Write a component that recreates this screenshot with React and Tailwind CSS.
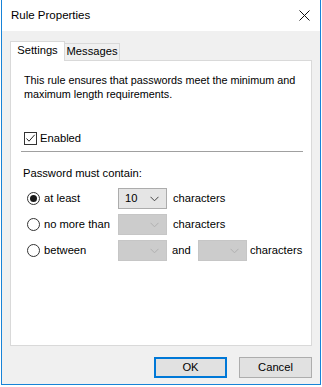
import React from "react";

const font = { fontFamily: '"Liberation Sans", Arial, sans-serif' };

function Chevron({ color = "#333" }) {
  return (
    <svg width="9" height="6" viewBox="0 0 9 6" className="block">
      <path d="M0.5 0.8 L4.5 4.8 L8.5 0.8" fill="none" stroke={color} strokeWidth="1" />
    </svg>
  );
}

function Combo({ value, disabled }) {
  return (
    <div
      className={
        "flex h-[21px] w-[49px] shrink-0 items-center justify-between border pl-[6px] pr-[7px] " +
        (disabled ? "border-[#c6c6c6] bg-[#cccccc]" : "border-[#acacac] bg-[#e5e5e5]")
      }
    >
      <span className="leading-none text-black">{value || ""}</span>
      <Chevron color={disabled ? "#b0b0b0" : "#444"} />
    </div>
  );
}

function Radio({ checked }) {
  return (
    <div className="flex h-[13px] w-[13px] shrink-0 items-center justify-center rounded-full border border-[#333] bg-white">
      {checked && <div className="h-[7px] w-[7px] rounded-full bg-[#1a1a1a]" />}
    </div>
  );
}

export default function App() {
  return (
    <div className="h-[387px] w-[322px] whitespace-nowrap bg-white text-[11.2px] text-black" style={font}>
      <div className="mx-[1px] flex h-[385px] w-[320px] flex-col border-x border-b border-[#1883d7] bg-[#f0f0f0]">
        {/* Title bar */}
        <div className="flex h-[31px] items-center justify-between bg-white pl-[9px] pr-[10px]">
          <span className="text-[11.5px] leading-none">Rule Properties</span>
          <svg width="11" height="11" viewBox="0 0 11 11" className="block">
            <path d="M0.5 0.5 L10.5 10.5 M10.5 0.5 L0.5 10.5" stroke="#111" strokeWidth="1" />
          </svg>
        </div>
        {/* Body */}
        <div className="flex flex-1 flex-col px-[8px] pt-[10px]">
          {/* Tabs */}
          <div className="relative z-10 -mb-[1px] flex h-[20px] items-end">
            <div className="flex h-[20px] w-[55px] items-center justify-center border-x border-t border-[#d9d9d9] bg-white pb-[1px]">
              <span className="leading-none">Settings</span>
            </div>
            <div className="flex h-[18px] w-[55px] items-center justify-center border-b border-r border-t border-[#d9d9d9] bg-[#f0f0f0]">
              <span className="leading-none">Messages</span>
            </div>
          </div>
          {/* Panel */}
          <div className="flex h-[286px] flex-col border border-[#d9d9d9] bg-white">
            <div className="pl-[13px] pr-[8px] pt-[12px] text-[10.8px] leading-[14px]">
              <div>This rule ensures that passwords meet the minimum and</div>
              <div>maximum length requirements.</div>
            </div>
            <div className="mt-[31px] flex h-[13px] items-center pl-[13px]">
              <div className="flex h-[13px] w-[13px] items-center justify-center border border-[#333] bg-white">
                <svg width="11" height="11" viewBox="0 0 11 11" className="block">
                  <path d="M1.5 5.5 L4 8.2 L9.7 1.8" fill="none" stroke="#222" strokeWidth="1" />
                </svg>
              </div>
              <span className="ml-[3px] leading-none">Enabled</span>
            </div>
            <div className="ml-[10px] mr-[8px] mt-[6px] h-[1px] bg-[#a0a0a0]" />
            <div className="mt-[16px] pl-[12px] leading-none">Password must contain:</div>
            <div className="mt-[9px] flex flex-col gap-[5px] pl-[16px]">
              <div className="flex h-[21px] items-center">
                <Radio checked />
                <span className="ml-[4px] w-[74px] leading-none">at least</span>
                <Combo value="10" />
                <span className="ml-[6px] leading-none">characters</span>
              </div>
              <div className="flex h-[21px] items-center">
                <Radio />
                <span className="ml-[4px] w-[74px] leading-none">no more than</span>
                <Combo disabled />
                <span className="ml-[6px] leading-none">characters</span>
              </div>
              <div className="flex h-[21px] items-center">
                <Radio />
                <span className="ml-[4px] w-[74px] leading-none">between</span>
                <Combo disabled />
                <span className="ml-[5px] w-[26px] leading-none">and</span>
                <Combo disabled />
                <span className="ml-[3px] leading-none">characters</span>
              </div>
            </div>
          </div>
          {/* Buttons */}
          <div className="flex justify-end gap-[12px] pt-[11px]">
            <div className="flex h-[21px] w-[73px] items-center justify-center border-2 border-[#0078d7] bg-[#e1e1e1]">
              <span className="leading-none">OK</span>
            </div>
            <div className="flex h-[21px] w-[73px] items-center justify-center border border-[#adadad] bg-[#e1e1e1]">
              <span className="leading-none">Cancel</span>
            </div>
          </div>
        </div>
      </div>
    </div>
  );
}
